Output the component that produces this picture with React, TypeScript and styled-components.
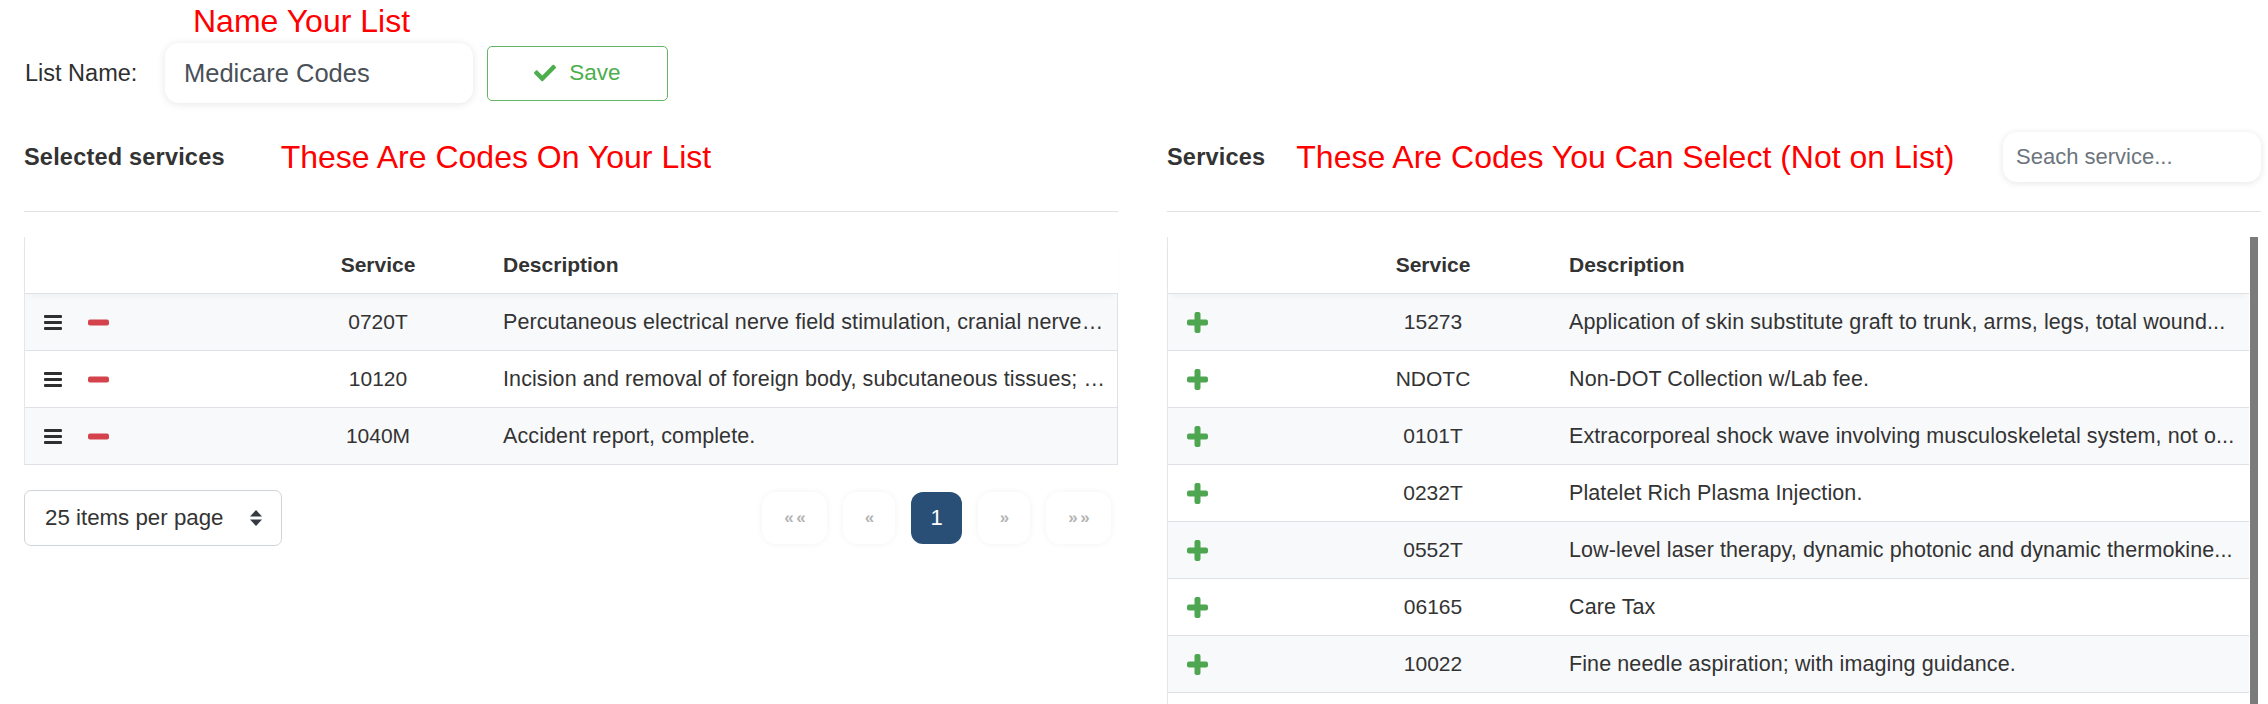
import React from "react";
import styled, { createGlobalStyle } from "styled-components";
import { FaCheck } from "react-icons/fa";

const GlobalStyle = createGlobalStyle`
  html, body { margin: 0; padding: 0; background: #ffffff; overflow: hidden; }
  body { font-family: "Liberation Sans", Arial, Helvetica, sans-serif; color: #333333; }
  *, *::before, *::after { box-sizing: border-box; }
`;

const Page = styled.div`
  width: 2268px;
  height: 704px;
  overflow: hidden;
  padding: 3px 7px 0 24px;
`;

const TopNote = styled.div`
  padding-left: 169px;
  height: 36px;
  display: flex;
  align-items: center;
`;

const Annotation = styled.span<{ $indent?: number }>`
  color: #ff0000;
  font-size: 32px;
  line-height: 36px;
  white-space: nowrap;
  margin-left: ${(p) => p.$indent ?? 0}px;
`;

const NameRow = styled.div`
  display: flex;
  align-items: center;
  height: 60px;
  margin-top: 4px;
`;

const Label = styled.label`
  width: 141px;
  font-size: 23.5px;
  color: #2f2f2f;
  padding-left: 1px;
`;

const NameInput = styled.input`
  width: 308px;
  height: 60px;
  border: none;
  border-radius: 14px;
  box-shadow: 0 1px 8px rgba(0, 0, 0, 0.1);
  padding: 0 19px;
  font-family: inherit;
  font-size: 25.5px;
  color: #495057;
  outline: none;
  background: #fff;
`;

const SaveButton = styled.button`
  margin-left: 14px;
  width: 181px;
  height: 55px;
  border: 1px solid #62b562;
  border-radius: 5px;
  background: #fff;
  color: #4cae4c;
  font-family: inherit;
  font-size: 22.5px;
  display: flex;
  align-items: center;
  justify-content: center;
  gap: 13px;
  cursor: pointer;
`;

const Columns = styled.div`
  display: grid;
  grid-template-columns: 1094px 1094px;
  column-gap: 49px;
  margin-top: 29px;
`;

const Panel = styled.section`
  display: flex;
  flex-direction: column;
  min-width: 0;
`;

const PanelHeader = styled.div`
  display: flex;
  align-items: center;
  height: 50px;
`;

const Title = styled.h2`
  margin: 0;
  font-size: 23.5px;
  letter-spacing: 0.2px;
  line-height: 26px;
  font-weight: 700;
  color: #333333;
  white-space: nowrap;
`;

const SearchInput = styled.input`
  margin-left: auto;
  width: 258px;
  height: 50px;
  border: none;
  border-radius: 14px;
  box-shadow: 0 1px 7px rgba(0, 0, 0, 0.11);
  padding: 0 13px;
  font-family: inherit;
  font-size: 22px;
  color: #495057;
  outline: none;
  background: #fff;
  &::placeholder { color: #6c757d; }
`;

const Divider = styled.hr`
  margin: 29px 0 0 0;
  border: none;
  height: 1px;
  background: #e2e2e2;
`;

const TableBox = styled.div<{ $scroll?: boolean }>`
  position: relative;
  margin-top: 25px;
  margin-right: ${(p) => (p.$scroll ? 12 : 0)}px;
  border-left: 1px solid #e3e6ea;
`;

const HeaderRow = styled.div<{ $cols: string }>`
  position: relative;
  z-index: 1;
  display: grid;
  grid-template-columns: ${(p) => p.$cols};
  align-items: center;
  height: 57px;
  border-bottom: 1px solid #dee2e6;
  background: #ffffff;
  box-shadow: 0 4px 8px -4px rgba(0, 0, 0, 0.07);
`;

const HeadCell = styled.div<{ $align?: string }>`
  font-size: 21px;
  font-weight: 700;
  color: #333333;
  text-align: ${(p) => p.$align ?? "left"};
  padding-left: ${(p) => (p.$align === "center" ? 0 : 20)}px;
`;

const BodyRow = styled.div<{ $cols: string; $striped: boolean; $bordered?: boolean }>`
  display: grid;
  grid-template-columns: ${(p) => p.$cols};
  align-items: center;
  height: 57px;
  border-bottom: 1px solid #dee2e6;
  border-right: ${(p) => (p.$bordered ? "1px solid #dee2e6" : "none")};
  background: ${(p) => (p.$striped ? "#f8f9fb" : "#ffffff")};
`;

const ActionCell = styled.div`
  display: flex;
  align-items: center;
  gap: 26px;
  padding-left: 19px;
`;

const CodeCell = styled.div`
  font-size: 21px;
  color: #333333;
  text-align: center;
`;

const DescCell = styled.div<{ $padRight: number }>`
  font-size: 21.5px;
  letter-spacing: 0.1px;
  color: #333333;
  padding-left: 20px;
  padding-right: ${(p) => p.$padRight}px;
  white-space: nowrap;
  overflow: hidden;
  text-overflow: ellipsis;
`;

const ScrollThumb = styled.div`
  position: absolute;
  top: 0;
  right: -9px;
  width: 8px;
  height: 480px;
  background: #7b7b7b;
`;

const Footer = styled.div`
  display: flex;
  align-items: center;
  justify-content: space-between;
  margin-top: 25px;
  padding-right: 7px;
`;

const PageSize = styled.div`
  width: 258px;
  height: 56px;
  border: 1px solid #ced4da;
  border-radius: 7px;
  display: flex;
  align-items: center;
  justify-content: space-between;
  padding: 0 19px 0 20px;
  font-size: 22.3px;
  color: #333333;
  background: #fff;
`;

const Pagination = styled.nav`
  display: flex;
  align-items: center;
  gap: 16px;
`;

const PageButton = styled.button<{ $wide?: boolean; $active?: boolean }>`
  width: ${(p) => (p.$wide ? 65 : p.$active ? 51 : 52)}px;
  height: 52px;
  border: none;
  border-radius: ${(p) => (p.$active ? 12 : 14)}px;
  background: ${(p) => (p.$active ? "#294f76" : "#ffffff")};
  box-shadow: ${(p) => (p.$active ? "none" : "0 0 7px rgba(0, 0, 0, 0.05)")};
  color: ${(p) => (p.$active ? "#ffffff" : "#b3b3b3")};
  font-family: inherit;
  font-size: ${(p) => (p.$active ? 22 : 17)}px;
  font-weight: ${(p) => (p.$active ? 400 : 700)};
  letter-spacing: ${(p) => (p.$active ? 0 : -1)}px;
  display: flex;
  align-items: center;
  justify-content: center;
  padding: 0;
`;

const Hamburger = () => (
  <svg width="18" height="15" viewBox="0 0 18 15">
    <rect x="0" y="0" width="18" height="3" rx="1" fill="#2f2f2f" />
    <rect x="0" y="6" width="18" height="3" rx="1" fill="#2f2f2f" />
    <rect x="0" y="12" width="18" height="3" rx="1" fill="#2f2f2f" />
  </svg>
);

const Minus = () => (
  <svg width="21" height="7" viewBox="0 0 21 7">
    <rect x="0" y="0.5" width="21" height="6" rx="2" fill="#d4434c" />
  </svg>
);

const Plus = () => (
  <svg width="21" height="21" viewBox="0 0 21 21">
    <rect x="7.5" y="0" width="6" height="21" rx="2" fill="#4ea650" />
    <rect x="0" y="7.5" width="21" height="6" rx="2" fill="#4ea650" />
  </svg>
);

const SortArrows = () => (
  <svg width="12" height="16" viewBox="0 0 12 16">
    <path d="M6 0 L12 6.5 L0 6.5 Z" fill="#343a40" />
    <path d="M0 9.5 L12 9.5 L6 16 Z" fill="#343a40" />
  </svg>
);

type Service = { code: string; desc: string };

const selected: Service[] = [
  { code: "0720T", desc: "Percutaneous electrical nerve field stimulation, cranial nerve…" },
  { code: "10120", desc: "Incision and removal of foreign body, subcutaneous tissues; …" },
  { code: "1040M", desc: "Accident report, complete." },
];

const available: Service[] = [
  { code: "15273", desc: "Application of skin substitute graft to trunk, arms, legs, total wound..." },
  { code: "NDOTC", desc: "Non-DOT Collection w/Lab fee." },
  { code: "0101T", desc: "Extracorporeal shock wave involving musculoskeletal system, not o..." },
  { code: "0232T", desc: "Platelet Rich Plasma Injection." },
  { code: "0552T", desc: "Low-level laser therapy, dynamic photonic and dynamic thermokine..." },
  { code: "06165", desc: "Care Tax" },
  { code: "10022", desc: "Fine needle aspiration; with imaging guidance." },
];

const LEFT_COLS = "248px 210px minmax(0, 1fr)";
const RIGHT_COLS = "149px 232px minmax(0, 1fr)";

export default function App() {
  return (
    <>
      <GlobalStyle />
      <Page>
        <TopNote>
          <Annotation>Name Your List</Annotation>
        </TopNote>
        <NameRow>
          <Label htmlFor="list-name">List Name:</Label>
          <NameInput id="list-name" defaultValue="Medicare Codes" />
          <SaveButton>
            <FaCheck size={22} />
            Save
          </SaveButton>
        </NameRow>

        <Columns>
          <Panel>
            <PanelHeader>
              <Title>Selected services</Title>
              <Annotation $indent={56}>These Are Codes On Your List</Annotation>
            </PanelHeader>
            <Divider />
            <TableBox>
              <HeaderRow $cols={LEFT_COLS}>
                <div />
                <HeadCell $align="center">Service</HeadCell>
                <HeadCell>Description</HeadCell>
              </HeaderRow>
              {selected.map((s, i) => (
                <BodyRow key={s.code} $cols={LEFT_COLS} $striped={i % 2 === 0} $bordered>
                  <ActionCell>
                    <Hamburger />
                    <Minus />
                  </ActionCell>
                  <CodeCell>{s.code}</CodeCell>
                  <DescCell $padRight={8}>{s.desc}</DescCell>
                </BodyRow>
              ))}
            </TableBox>
            <Footer>
              <PageSize>
                <span>25 items per page</span>
                <SortArrows />
              </PageSize>
              <Pagination>
                <PageButton $wide>« «</PageButton>
                <PageButton>«</PageButton>
                <PageButton $active>1</PageButton>
                <PageButton>»</PageButton>
                <PageButton $wide>» »</PageButton>
              </Pagination>
            </Footer>
          </Panel>

          <Panel>
            <PanelHeader>
              <Title>Services</Title>
              <Annotation $indent={31}>These Are Codes You Can Select (Not on List)</Annotation>
              <SearchInput placeholder="Seach service..." />
            </PanelHeader>
            <Divider />
            <TableBox $scroll>
              <HeaderRow $cols={RIGHT_COLS}>
                <div />
                <HeadCell $align="center">Service</HeadCell>
                <HeadCell>Description</HeadCell>
              </HeaderRow>
              {available.map((s, i) => (
                <BodyRow key={s.code} $cols={RIGHT_COLS} $striped={i % 2 === 0}>
                  <ActionCell>
                    <Plus />
                  </ActionCell>
                  <CodeCell>{s.code}</CodeCell>
                  <DescCell $padRight={6}>{s.desc}</DescCell>
                </BodyRow>
              ))}
              <BodyRow $cols={RIGHT_COLS} $striped={false} />
              <ScrollThumb />
            </TableBox>
          </Panel>
        </Columns>
      </Page>
    </>
  );
}
